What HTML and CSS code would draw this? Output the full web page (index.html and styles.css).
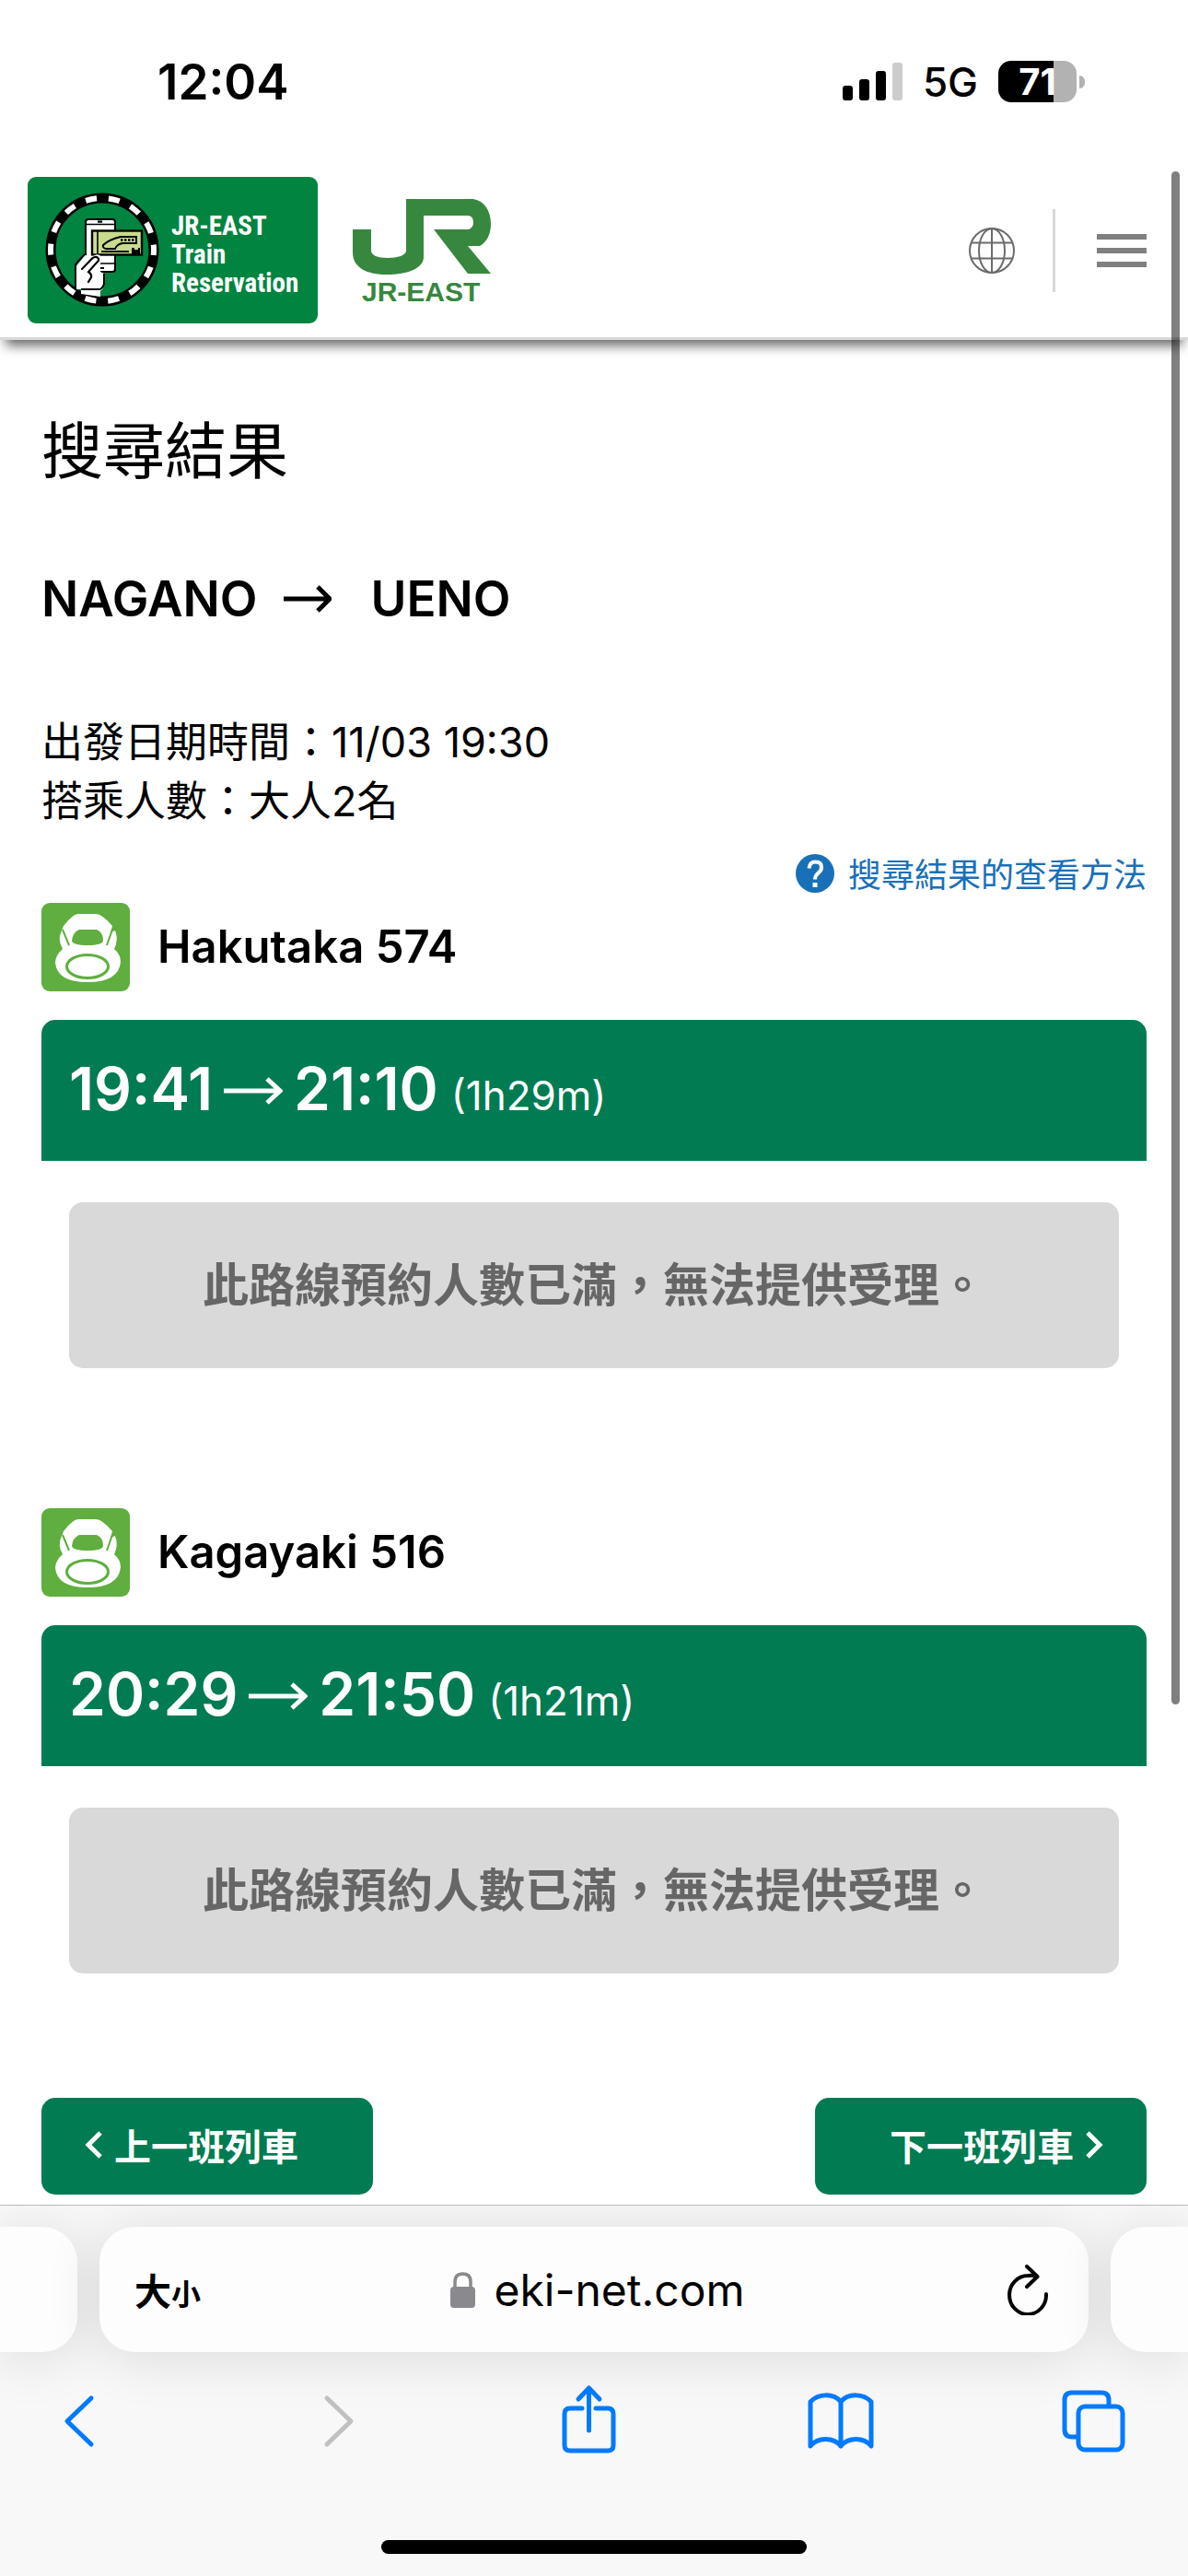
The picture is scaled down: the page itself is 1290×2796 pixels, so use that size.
FILE: index.html
```html
<!DOCTYPE html>
<html lang="zh-Hant">
<head>
    <meta charset="UTF-8">
    <meta name="viewport" content="width=device-width, initial-scale=1.0">
    <title>搜尋結果 | JR-EAST Train Reservation</title>
    <link rel="stylesheet" href="styles.css">
</head>
<body>

<div class="status-bar">
    <span class="status-time">12:04</span>
    <div class="status-icons">
        <svg class="signal" viewBox="0 0 65 41" aria-hidden="true">
            <rect x="0" y="25" width="11" height="16" rx="3"/>
            <rect x="18" y="18" width="11" height="23" rx="3"/>
            <rect x="36" y="9" width="11" height="32" rx="3"/>
            <rect x="54" y="0" width="11" height="41" rx="3" fill="#cccccc"/>
        </svg>
        <span class="network">5G</span>
        <div class="battery"><span class="battery-level">71</span></div>
    </div>
</div>

<header class="site-header">
    <a class="brand" href="#" aria-label="JR-EAST Train Reservation">
        <svg viewBox="0 0 315 159">
            <circle cx="81" cy="79" r="56" fill="none" stroke="#000" stroke-width="11"/>
            <circle cx="81" cy="79" r="56" fill="none" stroke="#fff" stroke-width="6" stroke-dasharray="12.13 13" stroke-dashoffset="6"/>
            <!-- phone -->
            <rect x="63" y="46" width="32" height="57" rx="3" fill="#fff" stroke="#000" stroke-width="2"/>
            <path d="M63 51.5H95M63 94H95" stroke="#000" stroke-width="1.5"/>
            <path d="M76 48.7h5M75 99h8" stroke="#000" stroke-width="2.2"/>
            <!-- ticket -->
            <rect x="70" y="58.5" width="54" height="26" fill="#c8dc8c" stroke="#000" stroke-width="2.4"/>
            <path d="M76 59V84" stroke="#000" stroke-width="1.6"/>
            <path d="M118 65H101C93 67 86 70 82 74Q81 77 85 78H95Q97 73 103 72H118Z" fill="none" stroke="#000" stroke-width="2"/>
            <path d="M101 68.5H116" stroke="#000" stroke-width="2.4" stroke-dasharray="2.5 1.5"/>
            <path d="M80 81H110" stroke="#000" stroke-width="2"/>
            <path d="M113 77h3v2h4v-2h2v8h-9z"/>
            <!-- hand -->
            <path d="M52 122V98L62 85L71 86Q77 82 80 87L79 95V103L83 105V118Q82 122 79 124V130L58 127V122Z" fill="#fff"/>
            <path d="M62 84L52 95V122M58 122H79M83 105V116Q82 120 79 122" fill="none" stroke="#000" stroke-width="2"/>
            <path d="M59 100L70 88.5Q75 85 77 89Q77.5 91 75 93L66 103Q70 106 69 109L66 114" fill="none" stroke="#000" stroke-width="2.2" stroke-linecap="round"/>
            <g class="brand-text">
                <text x="156" y="63">JR-EAST</text>
                <text x="156" y="94">Train</text>
                <text x="156" y="125">Reservation</text>
            </g>
        </svg>
    </a>
    <a class="jr-logo" href="#" aria-label="JR-EAST">
        <svg viewBox="0 -8 150 128">
            <path d="M58 0H131C143 2 150 13 150 27C150 39 145 47 138 51H125L150 81H125L88 33H126Q131 31 131 25.5Q131 18 125 18H77V63C77 75 60 82 37 82C16 82 0 75 0 58V33H20V56C20 61 27 64 38 64C49 64 58 61 58 56Z"/>
            <text x="10" y="111">JR-EAST</text>
        </svg>
    </a>
    <nav class="header-tools">
        <button class="icon-button" aria-label="Language">
            <svg class="globe" viewBox="0 0 50 50">
                <circle cx="25" cy="25" r="24"/>
                <ellipse cx="25" cy="25" rx="14" ry="24"/>
                <path d="M25 1V49M3 16.5H47M3 33.5H47"/>
            </svg>
        </button>
        <button class="icon-button menu-button" aria-label="Menu">
            <svg class="menu" viewBox="0 0 54 36">
                <path d="M0 3H54M0 18H54M0 33H54"/>
            </svg>
        </button>
    </nav>
</header>

<main class="results">
    <h1>搜尋結果</h1>

    <h2 class="route">
        <span>NAGANO</span>
        <svg class="route-arrow" viewBox="0 0 52 32" aria-label="→"><path d="M0 16H50M37 3L50 16L37 29"/></svg>
        <span>UENO</span>
    </h2>

    <div class="conditions">
        <p>出發日期時間：11/03 19:30</p>
        <p>搭乘人數：大人2名</p>
    </div>

    <a class="help-link" href="#">
        <svg viewBox="0 0 42 42" aria-hidden="true">
            <circle cx="21" cy="21" r="21" fill="#1a70b8"/>
            <path d="M14.5 15.5Q15 8.5 21.5 8.5Q28 8.5 28 14.5Q28 18 24.5 20.5Q21 23.5 21 27.5" fill="none" stroke="#fff" stroke-width="4"/>
            <rect x="18.5" y="31" width="5" height="5" fill="#fff"/>
        </svg>
        <span>搜尋結果的查看方法</span>
    </a>

    <section class="train">
        <div class="train-name">
            <svg class="luggage" viewBox="0 0 96 96" aria-hidden="true">
                <use href="#backpack"/>
            </svg>
            <h3>Hakutaka 574</h3>
        </div>
        <div class="train-time">
            <strong>19:41</strong>
            <svg class="time-arrow" viewBox="0 0 64 32" aria-label="→"><path d="M0 16H62M47 3L61 16L47 29"/></svg>
            <strong>21:10</strong>
            <span class="duration">(1h29m)</span>
        </div>
        <p class="sold-out">此路線預約人數已滿，無法提供受理。</p>
    </section>

    <section class="train">
        <div class="train-name">
            <svg class="luggage" viewBox="0 0 96 96" aria-hidden="true">
                <g id="backpack">
                    <rect width="96" height="96" rx="9" fill="#5fae3f"/>
                    <path d="M40 12H59Q66 12 77 25L75 32L80 30Q84 40 79 50Q86 56 86 64Q84 86 50 86Q17 86 15 65Q15 57 23 50Q17 40 22 30L24 25Q34 12 40 12Z" fill="#fff"/>
                    <path d="M41 29H60Q67 32 67 41Q66 46 50 46Q34 46 33 41Q34 32 41 29Z" fill="#5fae3f"/>
                    <path d="M23 29L30 46M77 29L71 46" stroke="#5fae3f" stroke-width="2"/>
                    <ellipse cx="50" cy="69" rx="22.5" ry="12.5" fill="none" stroke="#5fae3f" stroke-width="3"/>
                </g>
            </svg>
            <h3>Kagayaki 516</h3>
        </div>
        <div class="train-time">
            <strong>20:29</strong>
            <svg class="time-arrow" viewBox="0 0 64 32" aria-label="→"><path d="M0 16H62M47 3L61 16L47 29"/></svg>
            <strong>21:50</strong>
            <span class="duration">(1h21m)</span>
        </div>
        <p class="sold-out">此路線預約人數已滿，無法提供受理。</p>
    </section>

    <div class="pager">
        <button class="pager-button prev">
            <svg viewBox="0 0 20 32" aria-hidden="true"><path d="M17 3L4 16L17 29"/></svg>
            上一班列車
        </button>
        <button class="pager-button next">
            下一班列車
            <svg viewBox="0 0 20 32" aria-hidden="true"><path d="M3 3L16 16L3 29"/></svg>
        </button>
    </div>
</main>

<footer class="browser-bar">
    <div class="tabs">
        <div class="tab tab-left"></div>
        <div class="tab tab-current">
            <button class="text-size" aria-label="大小">大<small>小</small></button>
            <button class="address">
                <svg viewBox="0 0 27 39" aria-hidden="true">
                    <rect x="0" y="16" width="27" height="23" rx="4" fill="#8a8a8e"/>
                    <path d="M5 18V11Q5 2 13.5 2Q22 2 22 11V18" fill="none" stroke="#8a8a8e" stroke-width="3.5"/>
                </svg>
                eki-net.com
            </button>
            <button class="reload" aria-label="Reload">
                <svg viewBox="0 0 44 55">
                    <path d="M42 32A20 21 0 1 1 22 12Q28 11 32 13M21 2L32.5 13L21 24"/>
                </svg>
            </button>
        </div>
        <div class="tab tab-right"></div>
    </div>
    <nav class="browser-tools">
        <button aria-label="Back">
            <svg viewBox="0 0 80 80"><path d="M54 17L28 42L54 67"/></svg>
        </button>
        <button aria-label="Forward" disabled>
            <svg viewBox="0 0 80 80"><path d="M34 17L60 42L34 67"/></svg>
        </button>
        <button aria-label="Share">
            <svg viewBox="0 0 80 80"><path d="M36 28H23Q17 28 17 34V68Q17 74 23 74H64Q70 74 70 68V34Q70 28 64 28H51M43.5 52V7M32 18L43.5 6L55 18"/></svg>
        </button>
        <button aria-label="Bookmarks">
            <svg viewBox="0 0 80 80"><path d="M41 21C33 11 16 12 8 21V69C16 59 33 59 41 69C49 59 66 59 74 69V21C66 12 49 11 41 21V69"/></svg>
        </button>
        <button aria-label="Tabs">
            <svg viewBox="0 0 80 80"><path d="M23 59H17Q9 59 9 51V19Q9 11 17 11H49Q57 11 57 19V25"/><rect x="24" y="26" width="48" height="47" rx="7"/></svg>
        </button>
    </nav>
    <div class="home-indicator"></div>
</footer>

<div class="scroll-thumb"></div>

</body>
</html>
```
FILE: styles.css
```css
* {
    box-sizing: border-box;
}

body {
    position: relative;
    display: flex;
    flex-direction: column;
    min-height: 100vh;
    margin: 0;
    background-color: #ffffff;
    color: #000000;
    font-family: Inter, "Noto Sans CJK TC", sans-serif;
}

h1, h2, h3, p {
    margin: 0;
}

a {
    color: inherit;
    text-decoration: none;
}

button {
    padding: 0;
    border: none;
    background: none;
    color: inherit;
    font-family: inherit;
    cursor: pointer;
}

svg {
    display: block;
}

/* Status bar */
.status-bar {
    display: flex;
    justify-content: space-between;
    align-items: center;
    height: 177px;
    padding: 0 121px 0 171px;
}

.status-time {
    font-size: 53px;
    font-weight: 600;
}

.status-icons {
    display: flex;
    align-items: center;
    gap: 22px;
}

.signal {
    width: 65px;
    height: 41px;
}

.network {
    font-size: 44px;
    font-weight: 500;
}

.battery {
    position: relative;
    width: 85px;
    height: 45px;
    border-radius: 14px;
    background: linear-gradient(to right, #000000 71%, #b2b2b2 71%);
    color: #ffffff;
    line-height: 45px;
    text-align: center;
}

/* battery tip */
.battery::after {
    content: "";
    position: absolute;
    top: 16px;
    right: -9px;
    width: 6px;
    height: 14px;
    border-radius: 0 6px 6px 0;
    background-color: #b2b2b2;
}

.battery-level {
    font-size: 40px;
    font-weight: 700;
}

/* Header */
.site-header {
    display: flex;
    align-items: center;
    gap: 38px;
    padding: 15px 45px 15px 30px;
    border-bottom: 3px solid #d9d9d9;
    box-shadow: 0 12px 12px -6px rgba(0, 0, 0, 0.6);
}

.brand {
    width: 315px;
    border-radius: 9px;
    background-color: #00843f;
}

.brand-text {
    fill: #ffffff;
    font-family: "Liberation Sans Narrow", "Roboto Condensed", Roboto, sans-serif;
    font-size: 29px;
    font-weight: 700;
}

.jr-logo {
    width: 150px;
    fill: #37873f;
    font-family: "Liberation Sans", sans-serif;
    font-size: 30px;
    font-weight: 700;
}

.header-tools {
    display: flex;
    align-items: center;
    margin-left: auto;
}

.globe {
    width: 50px;
    margin-right: 41px;
    fill: none;
    stroke: #6b6b6b;
    stroke-width: 2;
}

.menu-button {
    display: flex;
    align-items: center;
    height: 90px;
    padding-left: 45px;
    border-left: 3px solid #d9d9d9;
}

.menu {
    width: 54px;
    stroke: #808080;
    stroke-width: 6;
}

/* Search results */
.results {
    flex: 1;
    padding: 80px 45px 11px;
}

h1 {
    font-size: 67px;
    font-weight: 400;
    line-height: 82px;
}

.route {
    display: flex;
    align-items: center;
    margin-top: 88px;
    font-size: 53px;
    font-weight: 600;
    line-height: 62px;
}

.route-arrow {
    width: 52px;
    margin: 0 42px 0 29px;
    fill: none;
    stroke: #000000;
    stroke-width: 5;
}

.conditions {
    margin-top: 93px;
    font-size: 45px;
    line-height: 64px;
}

.help-link {
    display: flex;
    justify-content: flex-end;
    align-items: center;
    gap: 15px;
    margin-top: 25px;
    color: #1a70b8;
    font-size: 36px;
    line-height: 42px;
}

.help-link svg {
    width: 42px;
}

.help-link span {
    padding-top: 2px;
    margin-bottom: -2px;
}

.train {
    margin-bottom: 152px;
}

.help-link + .train {
    margin-top: 11px;
}

.train-name {
    display: flex;
    align-items: center;
    gap: 30px;
}

.luggage {
    width: 96px;
}

h3 {
    font-size: 49px;
    font-weight: 600;
    line-height: 60px;
}

.train-time {
    display: flex;
    align-items: baseline;
    height: 153px;
    margin-top: 31px;
    padding: 0 30px;
    border-radius: 15px 15px 0 0;
    background-color: #007b52;
    color: #ffffff;
    line-height: 150px;
}

.train-time strong {
    font-size: 64px;
    font-weight: 600;
}

.time-arrow {
    align-self: center;
    width: 64px;
    margin: 0 12px;
    fill: none;
    stroke: #ffffff;
    stroke-width: 5;
}

.duration {
    margin-left: 14px;
    font-size: 44px;
}

.sold-out {
    margin: 45px 30px 0;
    border-radius: 15px;
    background-color: #d9d9d9;
    color: #666666;
    font-size: 50px;
    font-weight: 600;
    line-height: 180px;
    text-align: center;
}

.pager {
    display: flex;
    justify-content: space-between;
    margin-top: -17px;
}

.pager-button {
    display: flex;
    align-items: center;
    gap: 12px;
    width: 360px;
    height: 105px;
    padding: 0 47px 4px;
    border-radius: 15px;
    background-color: #007b52;
    color: #ffffff;
    font-size: 40px;
    font-weight: 600;
}

.pager-button svg {
    width: 20px;
    fill: none;
    stroke: #ffffff;
    stroke-width: 5;
}

.next {
    justify-content: flex-end;
}

/* Browser toolbar */
.browser-bar {
    padding-bottom: 24px;
    border-top: 1px solid #b8b8b8;
    background-color: #f8f8f8;
    overflow: hidden;
}

.tabs {
    display: grid;
    grid-template-columns: 84px 1fr 84px;
    gap: 24px;
    margin-top: 23px;
}

.tab {
    height: 136px;
    background-color: #fdfdfd;
    box-shadow: 0 6px 60px rgba(0, 0, 0, 0.12);
}

.tab-left {
    border-radius: 0 38px 38px 0;
}

.tab-right {
    border-radius: 38px 0 0 38px;
}

.tab-current {
    display: grid;
    grid-template-columns: 1fr auto 1fr;
    align-items: center;
    padding: 0 44px 0 38px;
    border-radius: 38px;
}

.text-size {
    justify-self: start;
    font-size: 40px;
    font-weight: 700;
}

.text-size small {
    font-size: 32px;
}

.address {
    display: flex;
    align-items: center;
    gap: 20px;
    margin-left: 14px;
    font-size: 48px;
}

.address svg {
    width: 27px;
}

.reload {
    justify-self: end;
}

.reload svg {
    width: 44px;
    fill: none;
    stroke: #000000;
    stroke-width: 4;
    stroke-linecap: round;
    stroke-linejoin: round;
}

.browser-tools {
    display: flex;
    justify-content: space-between;
    margin-top: 33px;
    padding: 0 63px 0 45px;
}

.browser-tools svg {
    width: 80px;
    fill: none;
    stroke: #007aff;
    stroke-width: 5;
    stroke-linecap: round;
    stroke-linejoin: round;
}

.browser-tools button:disabled svg {
    stroke: #c0c0c0;
}

.home-indicator {
    width: 462px;
    max-width: 60%;
    height: 15px;
    margin: 91px auto 0;
    border-radius: 8px;
    background-color: #000000;
}

/* Page scroll position, drawn over the content */
.scroll-thumb {
    position: absolute;
    top: 186px;
    right: 9px;
    width: 9px;
    height: 1664px;
    border-radius: 5px;
    background-color: rgba(0, 0, 0, 0.5);
}
```
